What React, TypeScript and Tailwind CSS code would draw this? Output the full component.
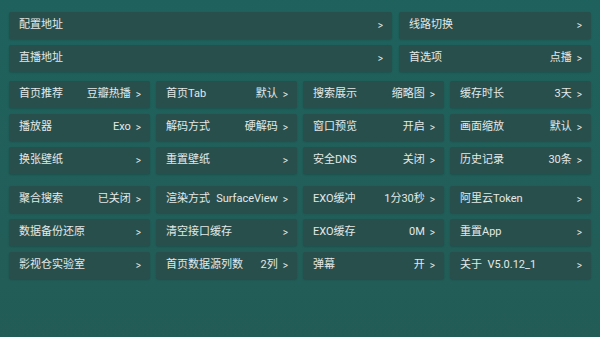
type Item = { label: string; value?: string };

const top: Item[] = [
  { label: "配置地址" },
  { label: "线路切换" },
  { label: "直播地址" },
  { label: "首选项", value: "点播" },
];

const groupA: Item[] = [
  { label: "首页推荐", value: "豆瓣热播" },
  { label: "首页Tab", value: "默认" },
  { label: "搜索展示", value: "缩略图" },
  { label: "缓存时长", value: "3天" },
  { label: "播放器", value: "Exo" },
  { label: "解码方式", value: "硬解码" },
  { label: "窗口预览", value: "开启" },
  { label: "画面缩放", value: "默认" },
  { label: "换张壁纸" },
  { label: "重置壁纸" },
  { label: "安全DNS", value: "关闭" },
  { label: "历史记录", value: "30条" },
];

const groupB: Item[] = [
  { label: "聚合搜索", value: "已关闭" },
  { label: "渲染方式", value: "SurfaceView" },
  { label: "EXO缓冲", value: "1分30秒" },
  { label: "阿里云Token" },
  { label: "数据备份还原" },
  { label: "清空接口缓存" },
  { label: "EXO缓存", value: "0M" },
  { label: "重置App" },
  { label: "影视仓实验室" },
  { label: "首页数据源列数", value: "2列" },
  { label: "弹幕", value: "开" },
  { label: "关于  V5.0.12_1" },
];

function Card({ item }: { item: Item }) {
  return (
    <div className="flex h-[27px] items-center justify-between rounded-[2px] bg-[#294f4d] pl-[10px] pr-[9px] shadow-[0_1px_2px_rgba(0,0,0,0.15)]">
      <span className="whitespace-pre">{item.label}</span>
      <span className="flex items-center gap-[5px] whitespace-nowrap">
        {item.value && <span>{item.value}</span>}
        <span className="text-[10px]">&gt;</span>
      </span>
    </div>
  );
}

export default function App() {
  return (
    <div
      className="h-[337px] w-[600px] overflow-hidden bg-gradient-to-b from-[#1f625d] to-[#235c57] px-[9px] pt-[12px] text-[11px] text-[#e3e9e7]"
      style={{ fontFamily: "Roboto, 'Noto Sans CJK SC', sans-serif" }}
    >
      <div className="grid grid-cols-[383px_1fr] gap-x-[7px] gap-y-[6px]">
        {top.map((it) => (
          <Card key={it.label} item={it} />
        ))}
      </div>
      <div className="mt-[9px] grid grid-cols-4 gap-x-[6px] gap-y-[6px]">
        {groupA.map((it) => (
          <Card key={it.label} item={it} />
        ))}
      </div>
      <div className="mt-[12px] grid grid-cols-4 gap-x-[6px] gap-y-[6px]">
        {groupB.map((it) => (
          <Card key={it.label} item={it} />
        ))}
      </div>
    </div>
  );
}
